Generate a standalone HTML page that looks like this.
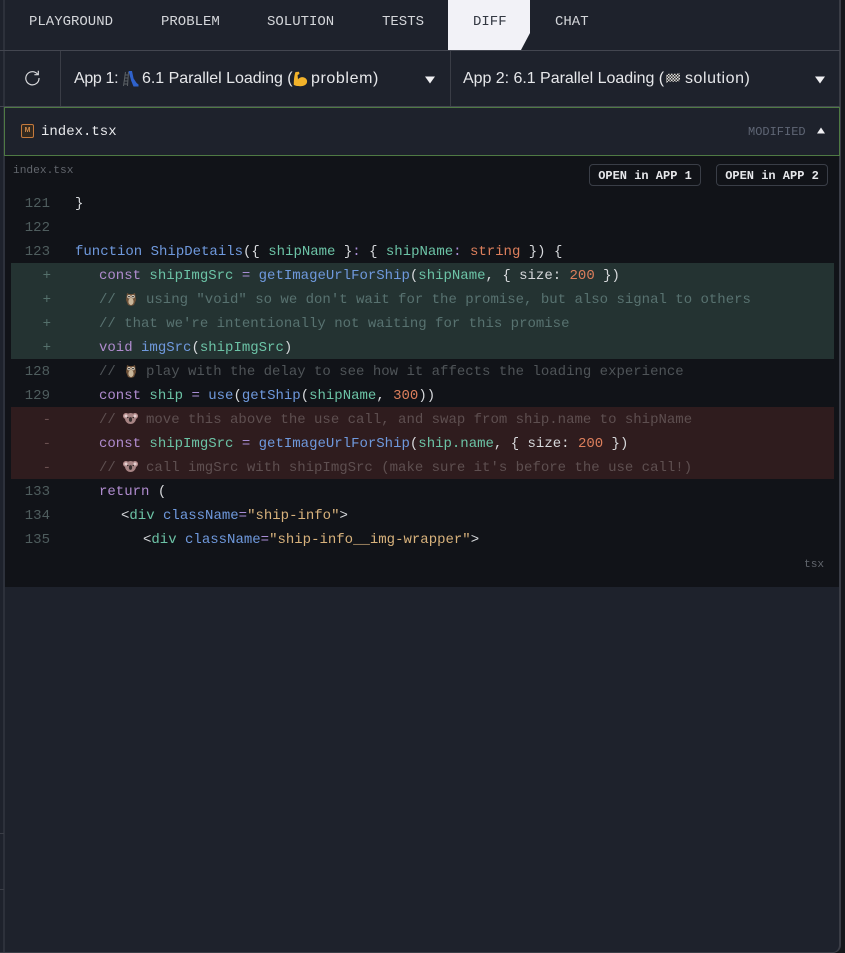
<!DOCTYPE html>
<html>
<head>
<meta charset="utf-8">
<style>
html,body{margin:0;padding:0;width:845px;height:953px;overflow:hidden;background:#15171b}
#p{position:relative;width:845px;height:953px;overflow:hidden}
.a{position:absolute}
.m{font-family:"Liberation Mono","DejaVu Sans Mono",monospace;white-space:pre}
.t{font-size:14px;line-height:20px;top:12px;color:#d4d6da}
.sans{font-family:"Liberation Sans",sans-serif;font-size:16px;line-height:24px;color:#e6e7ea;white-space:pre;top:67px}
.l{font-family:"Liberation Mono","DejaVu Sans Mono",monospace;white-space:pre;font-size:14px;line-height:24px;height:24px;color:#d7d9dc;margin-top:1px}
.g{font-family:"Liberation Mono","DejaVu Sans Mono",monospace;font-size:14px;line-height:24px;height:24px;width:40px;left:10px;text-align:right;color:#4f5d5e;margin-top:1px}
.k{color:#b08ccf}.f{color:#6f99dd}.v{color:#6cc3a6}.n{color:#dd7f5c}.s{color:#d8b27c}.o{color:#a98ed6}
.cg{color:#587270}.c{color:#4f5458}.cr{color:#5e4f50}
.btn{border:1px solid #3a3e47;border-radius:4px;box-sizing:border-box;width:112px;height:22px;top:164px;font:bold 12px/22px "Liberation Mono",monospace;color:#e6e7ea;text-align:center;white-space:pre}
svg.e{position:absolute}
</style>
</head>
<body>
<div id="p">
  <!-- panel -->
  <div class="a" style="left:0;top:0;width:840px;height:953px;background:#1e222c;border-bottom-right-radius:8px"></div>
  <div class="a" style="left:3px;top:0;width:2px;height:953px;background:#2d313b"></div>
  <div class="a" style="left:839px;top:0;width:2px;height:945px;background:#3a3d46"></div>
  <div class="a" style="left:0;top:952px;width:834px;height:1px;background:#3a3d46"></div>
  <div class="a" style="left:0;top:833px;width:4px;height:1px;background:#3a3d46"></div>
  <div class="a" style="left:0;top:889px;width:4px;height:1px;background:#3a3d46"></div>
  <div class="a" style="left:833px;top:945px;width:8px;height:8px;box-sizing:border-box;border-right:2px solid #3a3d46;border-bottom:1px solid #3a3d46;border-bottom-right-radius:8px"></div>

  <!-- tabs -->
  <div class="a m t" style="left:29px">PLAYGROUND</div>
  <div class="a m t" style="left:161px">PROBLEM</div>
  <div class="a m t" style="left:267px">SOLUTION</div>
  <div class="a m t" style="left:382px">TESTS</div>
  <div class="a" style="left:448px;top:0;width:82px;height:50px;background:#f2f2f7;clip-path:polygon(0 0,100% 0,100% 33px,73px 100%,0 100%)"></div>
  <div class="a m t" style="left:473px;color:#333842">DIFF</div>
  <div class="a m t" style="left:555px">CHAT</div>
  <div class="a" style="left:0;top:50px;width:840px;height:1px;background:#434650"></div>

  <!-- selects row -->
  <div class="a" style="left:60px;top:51px;width:1px;height:55px;background:#3a3d46"></div>
  <div class="a" style="left:450px;top:51px;width:1px;height:55px;background:#3a3d46"></div>
  <svg class="a" style="left:24px;top:69px" width="17" height="17" viewBox="0 0 17 17" fill="none" stroke="#d8d9dc" stroke-width="1.2"><path d="M13.6 5.2A6.6 6.6 0 1 0 15 9"/><path d="M14.3 1.8v3.9h-3.9"/></svg>

  <div class="a sans" style="left:74px;letter-spacing:-.35px">App 1:</div>
  <svg class="e" style="left:122px;top:70px" width="17" height="17" viewBox="0 0 17 17"><path d="M1.5 16L3.5 2M5.5 16L6.5 2M1.5 14h4M2 11h4M2.4 8h4M2.8 5h3.6" stroke="#5c6166" stroke-width="1" fill="none"/><path d="M6.5 1h3.5l1.6 7.5 3 4.5 1.9 1.5v2h-5l-2.4-6z" fill="#2f62cc"/></svg>
  <div class="a sans" style="left:142px;letter-spacing:-.03px">6.1 Parallel Loading (</div>
  <svg class="e" style="left:292px;top:71px" width="16" height="16" viewBox="0 0 16 16"><path d="M3.5 1L7 .7 7.5 3 5.6 4l.4 4.4C7.4 6.5 10 5.6 12.4 6.6c2.4 1 3.2 3.3 2.4 5.4-.9 2.2-3.7 3.3-6.7 3.2-2.7 0-5.2-.5-6.3-1.3C1.8 10 2 5 3.5 1z" fill="#f3b32a"/></svg>
  <div class="a sans" style="left:311px;letter-spacing:.6px">problem)</div>
  <svg class="a" style="left:425px;top:76px" width="10" height="8"><path d="M0 .5h10L5 7.5z" fill="#f0f0f3"/></svg>

  <div class="a sans" style="left:463px;letter-spacing:-.03px">App 2: 6.1 Parallel Loading (</div>
  <svg class="e" style="left:665px;top:72px" width="16" height="13" viewBox="0 0 16 13"><defs><pattern id="ck" width="3" height="3" patternUnits="userSpaceOnUse"><rect width="3" height="3" fill="#d8d8d8"/><rect width="1.5" height="1.5" fill="#333"/><rect x="1.5" y="1.5" width="1.5" height="1.5" fill="#333"/></pattern></defs><path d="M1 3C5 0 9 3 15 1v8C9 11 5 8 1 11z" fill="url(#ck)"/></svg>
  <div class="a sans" style="left:685px;letter-spacing:.55px">solution)</div>
  <svg class="a" style="left:815px;top:76px" width="10" height="8"><path d="M0 .5h10L5 7.5z" fill="#f0f0f3"/></svg>
  <div class="a" style="left:0;top:106px;width:840px;height:1px;background:#434650"></div>

  <!-- file header -->
  <div class="a" style="left:4px;top:107px;width:836px;height:49px;box-sizing:border-box;border:1px solid #4f7a44;background:#1e222c"></div>
  <div class="a" style="left:21px;top:124px;width:13px;height:14px;box-sizing:border-box;border:1px solid #c4793c;border-radius:2px;background:#33291f;color:#d08a4a;font:bold 7px/12px 'Liberation Sans',sans-serif;text-align:center">M</div>
  <div class="a m" style="left:41px;top:123px;font-size:14px;line-height:18px;color:#e8e9ec">index.tsx</div>
  <div class="a m" style="left:748px;top:124px;font-size:12px;line-height:16px;color:#5f6675">MODIFIED</div>
  <svg class="a" style="left:817px;top:127px" width="8" height="7"><path d="M0 6.5h8L4 .5z" fill="#f0f0f3"/></svg>

  <!-- code -->
  <div class="a" style="left:5px;top:156px;width:834px;height:431px;background:#111318"></div>
  <div class="a m" style="left:13px;top:163px;font-size:11.2px;line-height:16px;color:#62666d">index.tsx</div>
  <div class="a btn" style="left:589px">OPEN in APP 1</div>
  <div class="a btn" style="left:716px">OPEN in APP 2</div>

  <div class="a" style="left:11px;top:263px;width:823px;height:96px;background:#243332"></div>
  <div class="a" style="left:11px;top:407px;width:823px;height:72px;background:#2f1c1e"></div>

  <div class="a g" style="top:191px">121</div>
  <div class="a g" style="top:215px">122</div>
  <div class="a g" style="top:239px">123</div>
  <div class="a g" style="top:263px;left:11px;color:#55716c">+</div>
  <div class="a g" style="top:287px;left:11px;color:#55716c">+</div>
  <div class="a g" style="top:311px;left:11px;color:#55716c">+</div>
  <div class="a g" style="top:335px;left:11px;color:#55716c">+</div>
  <div class="a g" style="top:359px">128</div>
  <div class="a g" style="top:383px">129</div>
  <div class="a g" style="top:407px;left:11px;color:#6a5050">-</div>
  <div class="a g" style="top:431px;left:11px;color:#6a5050">-</div>
  <div class="a g" style="top:455px;left:11px;color:#6a5050">-</div>
  <div class="a g" style="top:479px">133</div>
  <div class="a g" style="top:503px">134</div>
  <div class="a g" style="top:527px">135</div>

  <div class="a l" style="left:75px;top:191px">}</div>
  <div class="a l" style="left:75px;top:239px"><span class="f">function ShipDetails</span>({ <span class="v">shipName</span> }<span class="o">:</span> { <span class="v">shipName</span><span class="o">:</span> <span class="n">string</span> }) {</div>

  <div class="a l" style="left:99px;top:263px"><span class="k">const</span> <span class="v">shipImgSrc</span> <span class="o">=</span> <span class="f">getImageUrlForShip</span>(<span class="v">shipName</span>, { size: <span class="n">200</span> })</div>
  <div class="a l cg" style="left:99px;top:287px">//</div>
  <div class="a l cg" style="left:146px;top:287px">using "void" so we don't wait for the promise, but also signal to others</div>
  <div class="a l cg" style="left:99px;top:311px">// that we're intentionally not waiting for this promise</div>
  <div class="a l" style="left:99px;top:335px"><span class="k">void</span> <span class="f">imgSrc</span>(<span class="v">shipImgSrc</span>)</div>
  <div class="a l c" style="left:99px;top:359px">//</div>
  <div class="a l c" style="left:146px;top:359px">play with the delay to see how it affects the loading experience</div>
  <div class="a l" style="left:99px;top:383px"><span class="k">const</span> <span class="v">ship</span> <span class="o">=</span> <span class="f">use</span>(<span class="f">getShip</span>(<span class="v">shipName</span>, <span class="n">300</span>))</div>
  <div class="a l cr" style="left:99px;top:407px">//</div>
  <div class="a l cr" style="left:146px;top:407px">move this above the use call, and swap from ship.name to shipName</div>
  <div class="a l" style="left:99px;top:431px"><span class="k">const</span> <span class="v">shipImgSrc</span> <span class="o">=</span> <span class="f">getImageUrlForShip</span>(<span class="v">ship.name</span>, { size: <span class="n">200</span> })</div>
  <div class="a l cr" style="left:99px;top:455px">//</div>
  <div class="a l cr" style="left:146px;top:455px">call imgSrc with shipImgSrc (make sure it's before the use call!)</div>
  <div class="a l" style="left:99px;top:479px"><span class="k">return</span> (</div>
  <div class="a l" style="left:121px;top:503px">&lt;<span class="v">div</span> <span class="f">className</span><span class="o">=</span><span class="s">"ship-info"</span>&gt;</div>
  <div class="a l" style="left:143px;top:527px">&lt;<span class="v">div</span> <span class="f">className</span><span class="o">=</span><span class="s">"ship-info__img-wrapper"</span>&gt;</div>
  <div class="a m" style="left:804px;top:557px;font-size:11.2px;line-height:16px;color:#62666d">tsx</div>

  <!-- owls -->
  <svg class="e" style="left:125px;top:292px" width="12" height="15" viewBox="0 0 12 15"><path d="M2 1l2 1h4l2-1 1 7-2 5-3 1-3-1-2-5z" fill="#6e5138"/><ellipse cx="6" cy="9.5" rx="2.6" ry="3.6" fill="#c9b69a"/><circle cx="4" cy="4.6" r="1.7" fill="#e2d8c8"/><circle cx="8" cy="4.6" r="1.7" fill="#e2d8c8"/><circle cx="4" cy="4.6" r=".8" fill="#222"/><circle cx="8" cy="4.6" r=".8" fill="#222"/></svg>
  <svg class="e" style="left:125px;top:364px" width="12" height="15" viewBox="0 0 12 15"><path d="M2 1l2 1h4l2-1 1 7-2 5-3 1-3-1-2-5z" fill="#6e5138"/><ellipse cx="6" cy="9.5" rx="2.6" ry="3.6" fill="#c9b69a"/><circle cx="4" cy="4.6" r="1.7" fill="#e2d8c8"/><circle cx="8" cy="4.6" r="1.7" fill="#e2d8c8"/><circle cx="4" cy="4.6" r=".8" fill="#222"/><circle cx="8" cy="4.6" r=".8" fill="#222"/></svg>
  <!-- koalas -->
  <svg class="e" style="left:123px;top:412px" width="15" height="13" viewBox="0 0 15 13"><circle cx="3" cy="4" r="3" fill="#b98f8f"/><circle cx="12" cy="4" r="3" fill="#b98f8f"/><ellipse cx="7.5" cy="6.5" rx="5.5" ry="5.5" fill="#a78484"/><circle cx="3" cy="4" r="1.5" fill="#e3cfcf"/><circle cx="12" cy="4" r="1.5" fill="#e3cfcf"/><ellipse cx="7.5" cy="7.5" rx="1.6" ry="2.4" fill="#3a2f2f"/><circle cx="4.8" cy="5.6" r=".7" fill="#2a2222"/><circle cx="10.2" cy="5.6" r=".7" fill="#2a2222"/></svg>
  <svg class="e" style="left:123px;top:460px" width="15" height="13" viewBox="0 0 15 13"><circle cx="3" cy="4" r="3" fill="#b98f8f"/><circle cx="12" cy="4" r="3" fill="#b98f8f"/><ellipse cx="7.5" cy="6.5" rx="5.5" ry="5.5" fill="#a78484"/><circle cx="3" cy="4" r="1.5" fill="#e3cfcf"/><circle cx="12" cy="4" r="1.5" fill="#e3cfcf"/><ellipse cx="7.5" cy="7.5" rx="1.6" ry="2.4" fill="#3a2f2f"/><circle cx="4.8" cy="5.6" r=".7" fill="#2a2222"/><circle cx="10.2" cy="5.6" r=".7" fill="#2a2222"/></svg>
</div>
</body>
</html>
